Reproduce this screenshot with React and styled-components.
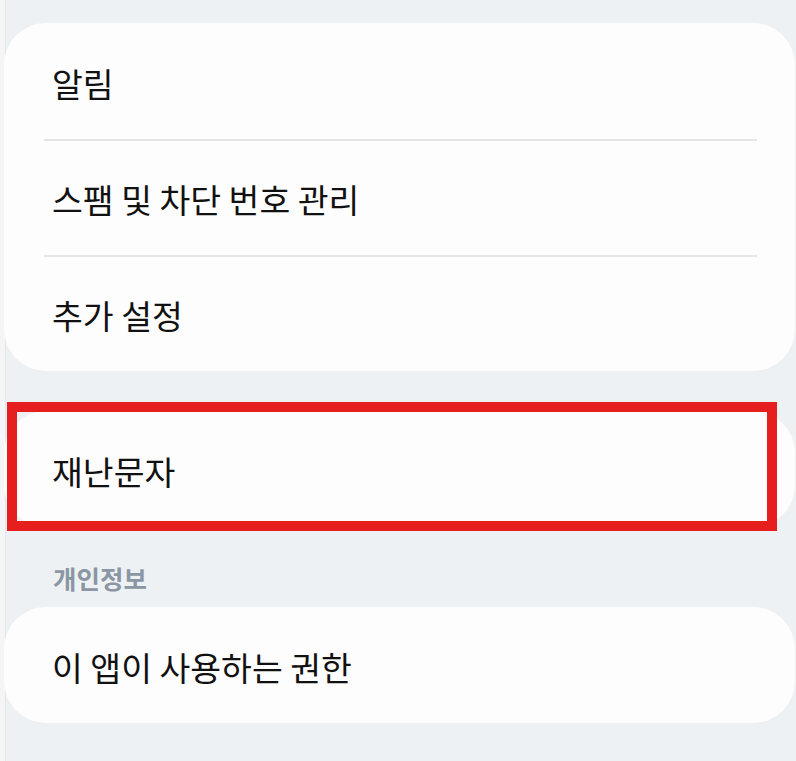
import React from "react";
import styled, { createGlobalStyle } from "styled-components";

const GlobalStyle = createGlobalStyle`
    html, body {
        margin: 0;
        padding: 0;
        background: #eef1f4;
    }
    body {
        font-family: "Noto Sans CJK KR", "Noto Sans", sans-serif;
        -webkit-font-smoothing: antialiased;
    }
`;

const Page = styled.div`
    min-height: 761px;
    box-sizing: border-box;
    padding: 23px 1px 0 4px;
    background: linear-gradient(to right, #f4f5f7 0 5px, #e3e6ea 5px 6px, #eef1f4 6px);
    display: flex;
    flex-direction: column;
`;

const Card = styled.div`
    background: #fdfdfd;
    border-radius: 42px;
    padding-top: 2px;
    margin-bottom: ${(p) => p.$gap || 0}px;
    display: flex;
    flex-direction: column;
`;

const Row = styled.div`
    height: 114px;
    display: flex;
    align-items: center;
    padding: 1px 0 0 48px;
    box-sizing: border-box;
    font-size: 33.5px;
    color: #111;
`;

const Divider = styled.div`
    height: 2px;
    background: #e6e6e6;
    margin: 0 38px 0 40px;
`;

const Highlight = styled.div`
    position: relative;
    margin-bottom: ${(p) => p.$gap || 0}px;
`;

const HighlightFrame = styled.div`
    position: absolute;
    top: -9px;
    left: 3px;
    width: 770px;
    height: 129px;
    box-sizing: border-box;
    border: 10px solid #e61e1e;
    pointer-events: none;
`;

const SectionTitle = styled.div`
    height: 80px;
    display: flex;
    align-items: center;
    padding: 20px 0 0 49px;
    box-sizing: border-box;
    font-size: 25.5px;
    font-weight: 700;
    color: #8a96a3;
`;

const generalItems = ["알림", "스팸 및 차단 번호 관리", "추가 설정"];

export default function App() {
    return (
        <>
            <GlobalStyle />
            <Page>
                <Card $gap={40}>
                    {generalItems.map((label, i) => (
                        <React.Fragment key={label}>
                            {i > 0 && <Divider />}
                            <Row>{label}</Row>
                        </React.Fragment>
                    ))}
                </Card>

                <Highlight>
                    <Card>
                        <Row>재난문자</Row>
                    </Card>
                    <HighlightFrame />
                </Highlight>

                <SectionTitle>개인정보</SectionTitle>

                <Card>
                    <Row>이 앱이 사용하는 권한</Row>
                </Card>
            </Page>
        </>
    );
}
